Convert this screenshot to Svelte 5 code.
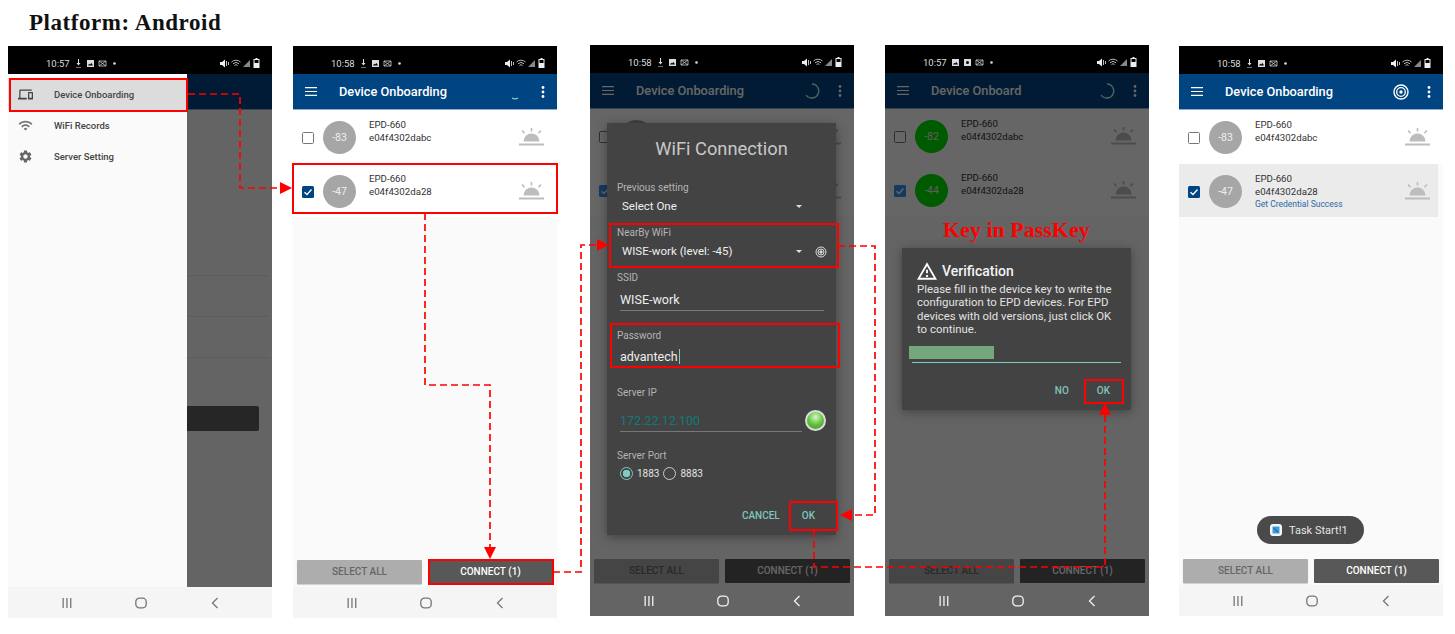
<script>
  const WHITE = ['-83', 'e04f4302dabc'];
  const wires = [
    'M188 94H240V188H282',
    'M425 213V385H490V548',
    'M553 572H581V245H598',
    'M838 246H875V515H851',
    'M814 530V567H1105V415'
  ];
  const heads = [
    '280,182 292,188 280,194',
    '484,547 496,547 490,559',
    '597,239 609,245 597,251',
    '852,509 840,515 852,521',
    '1099,415 1111,415 1105,403'
  ];
  const boxes = [
    [10, 79, 177, 32],
    [293, 164, 264, 49],
    [429, 560, 124, 24],
    [610, 224, 228, 43],
    [611, 324, 228, 43],
    [790, 502, 47, 28],
    [1085, 380, 38, 23]
  ];
</script>

{#snippet statusBar(time, icons)}
  <div class="status">
    <span class="time">{time}</span>
    {#each icons as name}
      <svg class="sicon" width="9" height="9" viewBox="0 0 9 9" fill="#ddd">
        {#if name === 'down'}
          <path d="M4 0h1v4h1.500L4.500 6.500 2.500 4H4zM2 8h5v.6H2z" />
        {:else if name === 'image'}
          <path fill-rule="evenodd" d="M1 1h7v7H1zM2 6.500h5L5.500 4 4 5.500 3.200 4.800z" />
        {:else if name === 'mail'}
          <path d="M1 2h7v5H1zM1 2l7 5M8 2 1 7" fill="none" stroke="#ccc" stroke-width=".8" />
        {:else if name === 'cam'}
          <path fill-rule="evenodd" d="M1 1h7v7H1zM4.500 3a1.500 1.500 0 1 0 0 3 1.500 1.500 0 0 0 0-3z" />
        {:else}
          <circle cx="4.500" cy="4.500" r="1.300" />
        {/if}
      </svg>
    {/each}
    <span class="sright">
      <svg width="9" height="9" viewBox="0 0 9 9" fill="#eee"><path d="M0 3h2l3-2.500v8L2 6H0zM6 2h.8v5H6zM8 3h.8v3H8z" /></svg>
      <svg width="10" height="9" viewBox="0 0 10 9" fill="none" stroke="#ccc" stroke-width=".9"><path d="M.5 3a6.500 6.500 0 0 1 9 0M2 4.800a4.300 4.300 0 0 1 6 0M3.500 6.500a2 2 0 0 1 3 0" /></svg>
      <svg width="8" height="9" viewBox="0 0 8 9" fill="#888"><path d="M0 8 7 1v7z" /></svg>
      <svg width="7" height="10" viewBox="0 0 7 10" fill="#eee"><path fill-rule="evenodd" d="M2.500 0h2v1H6.500v9h-6V1h2zM1.500 2v3h4V2z" /></svg>
    </span>
  </div>
{/snippet}

{#snippet appBar(title, spin)}
  <div class="appbar">
    {#if title}
      <svg class="burger" width="12" height="9" viewBox="0 0 12 9" fill="#fff"><path d="M0 0h12v1.200H0zM0 3.900h12v1.200H0zM0 7.800h12V9H0z" /></svg>
      <span class="apptitle">{title}</span>
      <svg class="slot" width="18" height="18" viewBox="0 0 18 18" fill="none">
        {#if spin === 'low'}
          <path d="M6 15.200A7 7 0 0 0 12 15.200" stroke="#80cbc4" stroke-width="1.300" />
        {:else if spin === 'arc'}
          <path d="M9 2A7 7 0 1 1 3 13" stroke="#b8fff6" stroke-width="1.300" />
        {:else if spin === 'target'}
          <circle cx="9" cy="9" r="7" stroke="#fff" stroke-width="1.400" />
          <circle cx="9" cy="9" r="4.300" stroke="#fff" stroke-width="1.300" />
          <circle cx="9" cy="9" r="1.700" fill="#fff" />
        {/if}
      </svg>
      <svg class="dots" width="4" height="12" viewBox="0 0 4 12" fill="#fff">
        <circle cx="2" cy="1.500" r="1.400" /><circle cx="2" cy="6" r="1.400" /><circle cx="2" cy="10.500" r="1.400" />
      </svg>
    {/if}
  </div>
{/snippet}

{#snippet row(level, mac, checked, tone, note)}
  <div class="row {tone}">
    <span class="check" class:on={checked}>
      {#if checked}
        <svg width="10" height="10" viewBox="0 0 10 10" fill="none" stroke="#fff" stroke-width="1.300"><path d="M1.500 5.200 4 7.500 8.500 2.500" /></svg>
      {/if}
    </span>
    <span class="avatar">{level}</span>
    {#if tone !== 'covered'}
      <div class="rowtext">
        <div>EPD-660</div>
        <div>{mac}</div>
        {#if note}<div class="note">{note}</div>{/if}
      </div>
    {/if}
    <svg class="sun" width="25" height="20" viewBox="0 0 25 20" fill="#bdbdbd">
      <path d="M4.500 14.500a8 8 0 0 1 16 0z" />
      <path d="M11.700 1h1.600v3.500h-1.600zM2.500 4l1.200-1 2.400 2.700-1.200 1zM22.500 4l-1.200-1-2.400 2.700 1.200 1z" />
      <path d="M0 16.500h25v2H0z" />
    </svg>
  </div>
{/snippet}

{#snippet buttons()}
  <div class="btns">
    <span class="btn select">SELECT ALL</span>
    <span class="btn connect">CONNECT (1)</span>
  </div>
{/snippet}

{#snippet nav()}
  <div class="nav">
    <svg width="12" height="12" viewBox="0 0 12 12" fill="currentColor"><path d="M1.500 1h1.300v10H1.500zM5.300 1h1.300v10H5.300zM9.100 1h1.300v10H9.100z" /></svg>
    <svg width="12" height="12" viewBox="0 0 12 12" fill="none" stroke="currentColor" stroke-width="1.300"><rect x=".8" y="1.200" width="10.400" height="9.600" rx="3.600" /></svg>
    <svg width="12" height="12" viewBox="0 0 12 12" fill="none" stroke="currentColor" stroke-width="1.300"><path d="M8.500 1 3.500 6l5 5" /></svg>
  </div>
{/snippet}

<div class="page">
  <h1>Platform: Android</h1>

  <div class="phones">
    <section class="phone p1">
      {@render statusBar('10:57', ['down', 'image', 'mail', 'dot'])}
      {@render appBar('', null)}
      <div class="body behind">
        <i></i><i></i><i></i>
        <b></b>
      </div>
      {@render nav()}
      <div class="scrim short"></div>
      <aside class="drawer">
        <div class="menu active">
          <svg width="15" height="15" viewBox="0 0 24 24" fill="#444"><path d="M4 6h18V4H4c-1.100 0-2 .9-2 2v11H0v3h14v-3H4V6zm19 2h-6c-.55 0-1 .45-1 1v10c0 .55.45 1 1 1h6c.55 0 1-.45 1-1V9c0-.55-.45-1-1-1zm-1 9h-4v-7h4v7z" /></svg>
          Device Onboarding
        </div>
        <div class="menu">
          <svg width="15" height="15" viewBox="0 0 24 24" fill="#777"><path d="M1 9l2 2c4.970-4.970 13.030-4.970 18 0l2-2C16.930 2.930 7.080 2.930 1 9zm8 8l3 3 3-3c-1.650-1.660-4.340-1.660-6 0zm-4-4l2 2c2.760-2.760 7.240-2.760 10 0l2-2C15.140 9.140 8.870 9.140 5 13z" /></svg>
          WiFi Records
        </div>
        <div class="menu">
          <svg width="15" height="15" viewBox="0 0 24 24" fill="#666"><path d="M19.140 12.940c.04-.3.06-.61.06-.94 0-.32-.02-.64-.07-.94l2.030-1.580c.18-.14.23-.41.12-.61l-1.920-3.320c-.12-.22-.37-.29-.59-.22l-2.390.96c-.5-.38-1.030-.7-1.620-.94l-.36-2.540c-.04-.24-.24-.41-.48-.41h-3.840c-.24 0-.43.17-.47.41l-.36 2.540c-.59.24-1.130.57-1.620.94l-2.390-.96c-.22-.08-.47 0-.59.22L2.740 8.870c-.12.21-.08.47.12.61l2.030 1.580c-.05.3-.09.63-.09.94s.02.64.07.94l-2.030 1.580c-.18.14-.23.41-.12.61l1.920 3.320c.12.22.37.29.59.22l2.390-.96c.5.38 1.030.7 1.620.94l.36 2.540c.05.24.24.41.48.41h3.840c.24 0 .44-.17.47-.41l.36-2.540c.59-.24 1.130-.56 1.620-.94l2.390.96c.22.08.47 0 .59-.22l1.920-3.320c.12-.22.07-.47-.12-.61l-2.010-1.580zM12 15.600c-1.980 0-3.600-1.620-3.600-3.600s1.620-3.600 3.600-3.600 3.600 1.620 3.600 3.600-1.620 3.600-3.600 3.600z" /></svg>
          Server Setting
        </div>
      </aside>
    </section>

    <section class="phone p2">
      {@render statusBar('10:58', ['down', 'image', 'mail', 'dot'])}
      {@render appBar('Device Onboarding', 'low')}
      <div class="body">
        {@render row(WHITE[0], WHITE[1], false, '', '')}
        {@render row('-47', 'e04f4302da28', true, '', '')}
        {@render buttons()}
      </div>
      {@render nav()}
    </section>

    <section class="phone p3 dim">
      {@render statusBar('10:58', ['down', 'image', 'mail', 'dot'])}
      {@render appBar('Device Onboarding', 'arc')}
      <div class="body">
        {@render row('', '', false, 'covered', '')}
        {@render row('', '', true, 'covered', '')}
        {@render buttons()}
      </div>
      {@render nav()}
      <div class="scrim"></div>
      <div class="dialog wifi">
        <h2>WiFi Connection</h2>
        <span class="lab first">Previous setting</span>
        <div class="select">Select One <u></u></div>
        <span class="lab">NearBy WiFi</span>
        <div class="select">WISE-work (level: -45) <u></u>
          <svg class="scan" width="12" height="12" viewBox="0 0 12 12" fill="none" stroke="#ddd">
            <circle cx="6" cy="6" r="5" /><circle cx="6" cy="6" r="3" /><circle cx="6" cy="6" r="1.200" fill="#ddd" />
          </svg>
        </div>
        <span class="lab">SSID</span>
        <div class="input ssid">WISE-work</div>
        <span class="lab gap">Password</span>
        <div class="input pass">advantech<s></s></div>
        <span class="lab ipgap">Server IP</span>
        <div class="ipline">
          <div class="input ip">172.22.12.100</div>
          <span class="led"></span>
        </div>
        <span class="lab port">Server Port</span>
        <div class="radios">
          <span class="radio on"></span>1883
          <span class="radio"></span>8883
        </div>
        <div class="actions">
          <span>CANCEL</span>
          <span>OK</span>
        </div>
      </div>
    </section>

    <section class="phone p4 dim">
      {@render statusBar('10:57', ['image', 'cam', 'mail', 'dot'])}
      {@render appBar('Device Onboard', 'arc')}
      <div class="body green">
        {@render row('-82', WHITE[1], false, '', '')}
        {@render row('-44', 'e04f4302da28', true, '', '')}
        {@render buttons()}
      </div>
      {@render nav()}
      <div class="scrim"></div>
      <div class="keyin">Key in PassKey</div>
      <div class="dialog verify">
        <h3>
          <svg width="20" height="18" viewBox="1 2 22 19" fill="#fff"><path d="M1 21h22L12 2 1 21zm3.470-2L12 5.990 19.530 19H4.470zM11 16h2v2h-2zm0-6h2v4h-2z" /></svg>
          Verification
        </h3>
        <p>Please fill in the device key to write the configuration to EPD devices. For EPD devices with old versions, just click OK to continue.</p>
        <div class="keyfield"><span></span></div>
        <div class="actions">
          <span>NO</span>
          <span>OK</span>
        </div>
      </div>
    </section>

    <section class="phone p5">
      {@render statusBar('10:58', ['down', 'image', 'mail', 'dot'])}
      {@render appBar('Device Onboarding', 'target')}
      <div class="body">
        {@render row(WHITE[0], WHITE[1], false, '', '')}
        {@render row('-47', 'e04f4302da28', true, 'picked', 'Get Credential Success')}
        {@render buttons()}
      </div>
      {@render nav()}
      <div class="toast">
        <svg width="12" height="12" viewBox="0 0 12 12"><rect width="12" height="12" rx="3" fill="#f4f8fb" /><rect x="2.500" y="2.500" width="7" height="7" fill="#3d9bd8" /><path d="M3.500 4 8 8" stroke="#12517f" /></svg>
        Task Start!1
      </div>
    </section>
  </div>

  <svg class="wires" width="1455" height="634" viewBox="0 0 1455 634" fill="none">
    {#each wires as d}
      <path {d} stroke="#f00" stroke-width="1.700" stroke-dasharray="7 4" />
    {/each}
    {#each heads as points}
      <polygon {points} fill="#f00" />
    {/each}
    {#each boxes as [x, y, width, height]}
      <rect {x} {y} {width} {height} stroke="#f00" stroke-width="2" />
    {/each}
  </svg>
</div>

<style>
  :global(body) {
    background: #fff;
  }
  .page {
    position: relative;
    width: 1455px;
    height: 634px;
    overflow: hidden;
    font-family: Roboto, "Noto Sans", sans-serif;
  }
  h1 {
    margin: 0;
    padding: 10px 0 0 29px;
    height: 45px;
    box-sizing: border-box;
    font: bold 23px/26px "Liberation Serif", serif;
    letter-spacing: 0.55px;
    color: #111;
  }
  .phones {
    display: flex;
    align-items: flex-start;
    padding: 1px 0 0 8px;
  }
  .phone {
    position: relative;
    display: flex;
    flex-direction: column;
    flex: none;
    width: 264px;
    height: 572px;
    overflow: hidden;
    background: #fafafa;
  }
  .p2 {
    margin-left: 21px;
  }
  .p3 {
    margin: -1px 0 0 33px;
    height: 571px;
  }
  .p4 {
    margin: -1px 0 0 31px;
    height: 571px;
  }
  .p5 {
    margin-left: 30px;
    height: 570px;
  }

  .status {
    display: flex;
    align-items: center;
    gap: 3px;
    flex: none;
    height: 28px;
    padding: 6px 12px 0 38px;
    box-sizing: border-box;
    background: #000;
  }
  .time {
    margin-right: 1px;
    font-size: 9.500px;
    color: #ddd;
  }
  .sright {
    display: flex;
    align-items: center;
    gap: 2px;
    margin-left: auto;
  }

  .appbar {
    display: flex;
    align-items: center;
    flex: none;
    height: 36px;
    box-sizing: border-box;
    padding-right: 12px;
    background: #004481;
    border-bottom: 1px solid #8fa9cc;
  }
  .burger {
    margin-left: 12px;
  }
  .apptitle {
    margin-left: 22px;
    font-size: 12.800px;
    font-weight: 500;
    color: #fff;
  }
  .slot {
    margin-left: auto;
  }
  .dots {
    margin-left: 17px;
  }

  .body {
    display: flex;
    flex-direction: column;
    flex: 1;
    min-height: 0;
  }
  .behind {
    padding: 165px 3px 0 20px;
  }
  .behind i {
    display: block;
    height: 1px;
    margin-bottom: 40px;
    background: #e6e6e6;
  }
  .behind b {
    display: block;
    height: 25px;
    margin: 8px 10px 0 0;
    border-radius: 2px;
    background: #5f5f5f;
  }

  .row {
    display: flex;
    align-items: flex-start;
    flex: none;
    height: 53.5px;
    box-sizing: border-box;
    padding: 8px 13px 0 9px;
    background: #fff;
  }
  .row.picked {
    margin-right: 5px;
    padding-right: 8px;
    background: #ebebeb;
  }
  .check {
    flex: none;
    width: 12px;
    height: 12px;
    margin-top: 14px;
    box-sizing: border-box;
    border: 1.500px solid #777;
    border-radius: 1.500px;
    background: #fff;
  }
  .check.on {
    display: flex;
    align-items: center;
    justify-content: center;
    border: 0;
    background: #004481;
  }
  .dim .check.on {
    background: #3491f0;
  }
  .avatar {
    display: flex;
    align-items: center;
    justify-content: center;
    flex: none;
    width: 33px;
    height: 33px;
    margin: 3px 0 0 9px;
    border-radius: 50%;
    background: #a6a6a6;
    font-size: 10.500px;
    color: #eee;
  }
  .green .avatar {
    background: #00e000;
  }
  .rowtext {
    margin-left: 13px;
    font-size: 9.700px;
    line-height: 13.300px;
    color: #333;
  }
  .note {
    font-size: 8.500px;
    color: #2b6aa0;
  }
  .sun {
    margin: 9px 0 0 auto;
  }

  .btns {
    display: flex;
    gap: 6px;
    margin-top: auto;
    padding: 0 4px 3px;
  }
  .p3 .btns,
  .p4 .btns,
  .p5 .btns {
    padding-bottom: 2px;
  }
  .btn {
    flex: 1;
    height: 24px;
    border-radius: 1px;
    font-size: 10px;
    font-weight: 500;
    line-height: 24px;
    text-align: center;
  }
  .select {
    color: #666;
  }
  .btn.select {
    background: #adadad;
    box-shadow: 0 1px 1px #ccc;
  }
  .btn.connect {
    background: #585858;
    color: #fff;
  }

  .nav {
    position: relative;
    z-index: 2;
    display: grid;
    grid-template-columns: repeat(3, 74px);
    justify-items: center;
    align-items: center;
    flex: none;
    height: 31px;
    padding-left: 22px;
    background: #f5f5f5;
    color: #777;
  }
  .dim .nav {
    background: transparent;
    color: #f2f2f2;
  }

  .scrim {
    position: absolute;
    inset: 28px 0 0;
    background: rgba(0, 0, 0, 0.6);
  }
  .scrim.short {
    bottom: 31px;
  }

  .drawer {
    position: absolute;
    top: 28px;
    left: 0;
    bottom: 31px;
    width: 179px;
    padding-top: 4px;
    box-sizing: border-box;
    background: #fafafa;
  }
  .menu {
    display: flex;
    align-items: center;
    gap: 21px;
    height: 31px;
    padding-left: 10px;
    font-size: 9.500px;
    font-weight: 500;
    color: #444;
  }
  .menu.active {
    height: 32px;
    background: #dcdcdc;
  }

  .dialog {
    position: absolute;
    left: 17px;
    display: flex;
    flex-direction: column;
    width: 229px;
    box-sizing: border-box;
    background: #434343;
    box-shadow: 0 2px 10px rgba(0, 0, 0, 0.35);
  }
  .wifi {
    top: 78px;
    height: 412px;
    padding: 14px 10px 11px;
  }
  h2 {
    margin: 0;
    font-size: 18.300px;
    font-weight: 400;
    line-height: 24px;
    text-align: center;
    color: #c8c8c8;
  }
  .lab {
    display: block;
    height: 14px;
    margin-top: 9px;
    font-size: 10px;
    line-height: 14px;
    color: #b4b4b4;
  }
  .lab.first {
    margin-top: 20px;
  }
  .lab.gap {
    margin-top: 18px;
  }
  .lab.ipgap {
    margin-top: 19px;
  }
  .lab.port {
    margin-top: 17px;
  }
  .dialog .select {
    position: relative;
    height: 22px;
    padding-left: 5px;
    font-size: 11.500px;
    line-height: 22px;
    color: #eee;
  }
  .dialog .select u {
    position: absolute;
    top: 10px;
    left: 179px;
    border: 3px solid transparent;
    border-top: 3.500px solid #ddd;
    border-bottom: 0;
  }
  .scan {
    position: absolute;
    top: 6px;
    left: 198px;
  }
  .input {
    margin-left: 3px;
    margin-right: 2px;
    box-sizing: border-box;
    border-bottom: 1px solid #777;
    font-size: 12.500px;
    color: #eee;
  }
  .ssid {
    height: 26px;
    padding-top: 7px;
    line-height: 16px;
  }
  .pass {
    display: flex;
    height: 24px;
    padding-top: 6px;
    line-height: 16px;
    border-color: #4c4c4c;
  }
  .pass s {
    display: block;
    width: 1px;
    height: 15px;
    margin-left: 1px;
    background: #80cbc4;
  }
  .ipline {
    display: flex;
    align-items: flex-start;
  }
  .ip {
    flex: 1;
    height: 32px;
    margin-right: 0;
    padding-top: 13px;
    line-height: 16px;
    color: #0f7b78;
  }
  .led {
    flex: none;
    width: 21px;
    height: 21px;
    margin: 10px 0 0 3px;
    box-sizing: border-box;
    border: 2px solid #dcdcdc;
    border-radius: 50%;
    background: radial-gradient(circle at 50% 30%, #d9f5cb 0, #63c43d 50%, #3f8e2a 100%);
  }
  .radios {
    display: flex;
    align-items: center;
    height: 20px;
    padding-left: 3px;
    font-size: 10px;
    color: #e4e4e4;
  }
  .radio {
    flex: none;
    width: 13px;
    height: 13px;
    margin-right: 4px;
    box-sizing: border-box;
    border: 1px solid #ccc;
    border-radius: 50%;
  }
  .radio.on ~ .radio {
    margin-left: 4px;
  }
  .radio.on {
    border-color: #80cbc4;
    background: radial-gradient(circle, #80cbc4 0 3.500px, transparent 4px);
  }
  .actions {
    display: flex;
    justify-content: flex-end;
    gap: 22px;
    margin-top: auto;
    padding-right: 11px;
    font-size: 10px;
    font-weight: 500;
    line-height: 16px;
    color: #7fc4bd;
  }
  .verify {
    top: 203px;
    height: 162px;
    padding: 13px 10px 11px 15px;
  }
  h3 {
    display: flex;
    align-items: center;
    gap: 5px;
    margin: 0;
    font-size: 14px;
    font-weight: 500;
    line-height: 20px;
    color: #f2f2f2;
  }
  p {
    margin: 2px 0 0;
    font-size: 11.400px;
    line-height: 13.400px;
    color: #e2e2e2;
  }
  .keyfield {
    height: 23px;
    margin: 3px 0 0 -5px;
    padding-top: 6px;
    box-sizing: border-box;
    border-bottom: 1px solid #80cbc4;
  }
  .keyfield span {
    display: block;
    width: 85px;
    height: 13px;
    margin-left: -3px;
    background: #74a87c;
  }
  .verify .actions {
    gap: 28px;
    padding-right: 11px;
  }
  .keyin {
    position: absolute;
    top: 173px;
    left: 58px;
    font: bold 22px/24px "Liberation Serif", serif;
    color: #f00;
  }
  .toast {
    position: absolute;
    top: 470px;
    left: 78px;
    display: flex;
    align-items: center;
    gap: 7px;
    width: 107px;
    height: 28px;
    padding-left: 13px;
    box-sizing: border-box;
    border-radius: 14px;
    background: #4a4a4a;
    font-size: 11px;
    color: #e4e4e4;
  }
  .wires {
    position: absolute;
    top: 0;
    left: 0;
    pointer-events: none;
  }
</style>
